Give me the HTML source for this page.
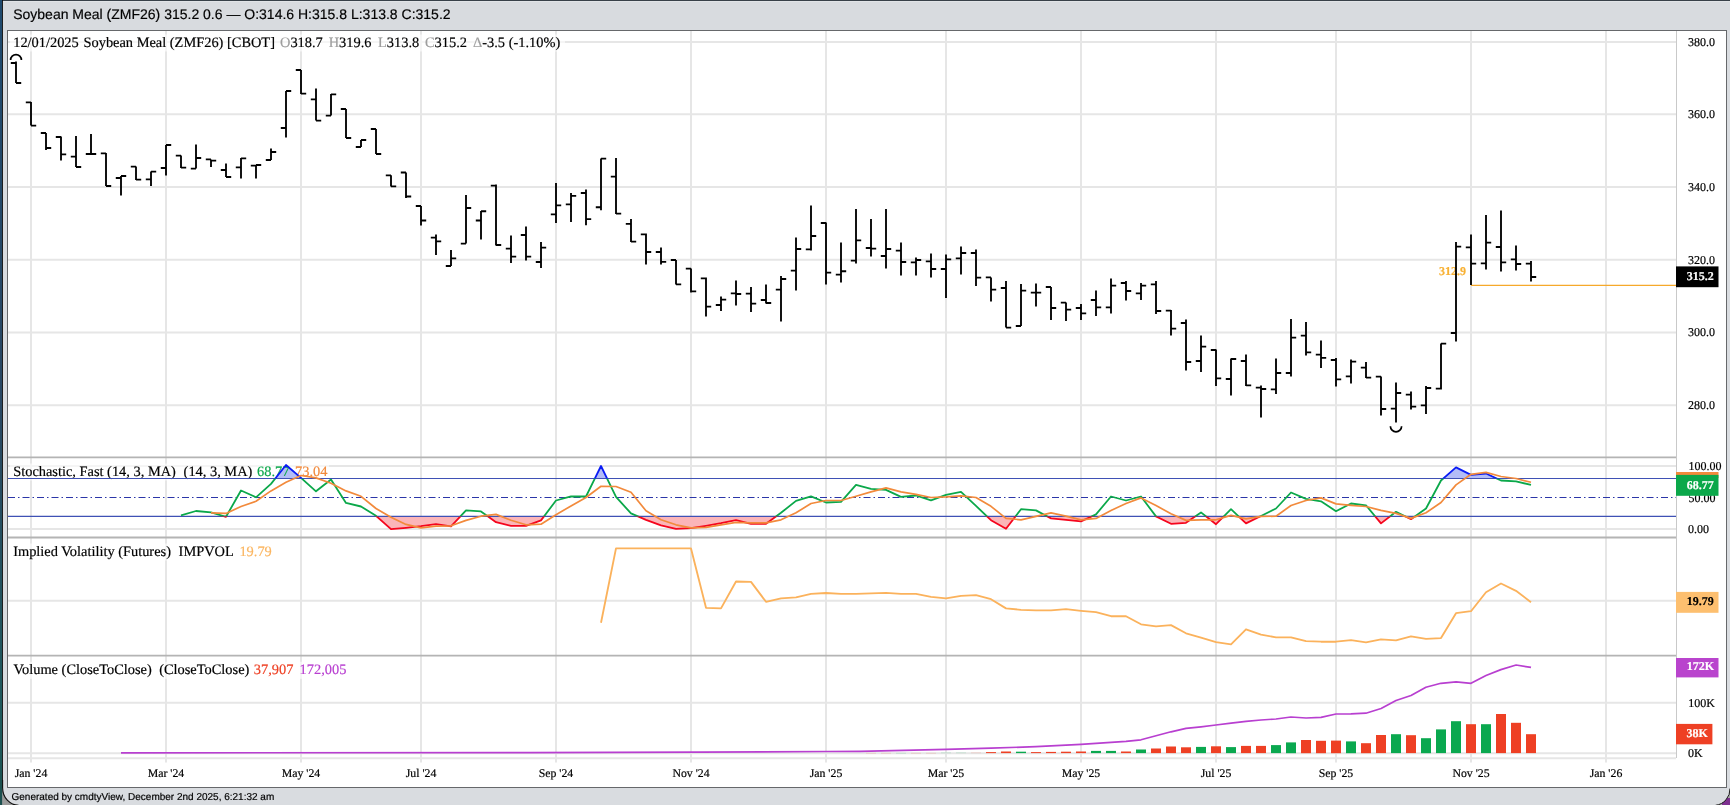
<!DOCTYPE html><html><head><meta charset="utf-8"><title>Chart</title><style>
html,body{margin:0;padding:0;background:#d9dce0;overflow:hidden}
svg{display:block;position:absolute;left:0;top:0;will-change:transform}
text{text-rendering:geometricPrecision;stroke-width:0.18px}
.s{font-family:"Liberation Serif",serif;font-size:14.4px}
.h{paint-order:stroke;stroke:#fff;stroke-opacity:.7;stroke-width:2.5px;stroke-linejoin:round}
.ax{font-family:"Liberation Serif",serif;font-size:12px}
.axb{font-family:"Liberation Serif",serif;font-size:12px;font-weight:bold}
.xl{font-family:"Liberation Serif",serif;font-size:11.8px}
.t{font-family:"Liberation Sans",sans-serif;font-size:14px}
.f{font-family:"Liberation Sans",sans-serif;font-size:10px}
</style></head><body>
<svg width="1730" height="805" viewBox="0 0 1730 805">
<defs><linearGradient id="tg" x1="0" y1="0" x2="0" y2="1"><stop offset="0" stop-color="#d2d5d9"/><stop offset="1" stop-color="#dcdfe3"/></linearGradient>
<clipPath id="above"><rect x="8" y="458" width="1668" height="20.5"/></clipPath>
<clipPath id="mid"><rect x="8" y="478.5" width="1668" height="37.9"/></clipPath>
<clipPath id="below"><rect x="8" y="516.4" width="1668" height="21"/></clipPath>
</defs>
<rect x="0" y="0" width="1730" height="805" fill="#d9dce0"/>
<rect x="0" y="0" width="1730" height="30" fill="#d8dbdf"/>
<path d="M1730 789 A16 16 0 0 1 1716.3 805 L1730 805 Z" fill="#a8a8a8"/>
<clipPath id="brc"><path d="M1730 789 A16 16 0 0 1 1716.3 805 L1730 805 Z"/></clipPath>
<rect x="1722" y="798" width="8" height="7" fill="#7d2f8f" clip-path="url(#brc)"/>
<path d="M1730 788.5 A16.3 16.3 0 0 1 1715.5 805.3" fill="none" stroke="#1a1a1a" stroke-width="1"/>
<rect x="0" y="0" width="1730" height="0.9" fill="#101a24"/>
<rect x="0" y="0.9" width="1730" height="0.8" fill="#e6e8ea"/>
<defs><linearGradient id="lg" x1="0" y1="0" x2="0" y2="1"><stop offset="0" stop-color="#1f4a6e"/><stop offset="0.5" stop-color="#2a4863"/><stop offset="0.9" stop-color="#1f5a5c"/><stop offset="1" stop-color="#1c504f"/></linearGradient></defs>
<rect x="0" y="0" width="2.1" height="805" fill="url(#lg)"/>
<rect x="2.1" y="0" width="0.9" height="805" fill="#0b0b0b"/>
<path d="M0 788 L3 788 A15.6 17 0 0 0 18.6 805 L0 805 Z" fill="#9b9b9b"/>
<rect x="0" y="780" width="2.1" height="25" fill="#1c504f"/>
<path d="M2.6 780 L2.6 788 A16 17.3 0 0 0 18.6 805.3" fill="none" stroke="#111" stroke-width="1.1"/>
<rect x="7.5" y="30.5" width="1719" height="757" fill="#ffffff" stroke="#66686b" stroke-width="1"/>
<line x1="31" y1="31" x2="31" y2="762.5" stroke="#e6e6e6" stroke-width="2"/>
<line x1="166" y1="31" x2="166" y2="762.5" stroke="#e6e6e6" stroke-width="2"/>
<line x1="301" y1="31" x2="301" y2="762.5" stroke="#e6e6e6" stroke-width="2"/>
<line x1="421" y1="31" x2="421" y2="762.5" stroke="#e6e6e6" stroke-width="2"/>
<line x1="556" y1="31" x2="556" y2="762.5" stroke="#e6e6e6" stroke-width="2"/>
<line x1="691" y1="31" x2="691" y2="762.5" stroke="#e6e6e6" stroke-width="2"/>
<line x1="826" y1="31" x2="826" y2="762.5" stroke="#e6e6e6" stroke-width="2"/>
<line x1="946" y1="31" x2="946" y2="762.5" stroke="#e6e6e6" stroke-width="2"/>
<line x1="1081" y1="31" x2="1081" y2="762.5" stroke="#e6e6e6" stroke-width="2"/>
<line x1="1216" y1="31" x2="1216" y2="762.5" stroke="#e6e6e6" stroke-width="2"/>
<line x1="1336" y1="31" x2="1336" y2="762.5" stroke="#e6e6e6" stroke-width="2"/>
<line x1="1471" y1="31" x2="1471" y2="762.5" stroke="#e6e6e6" stroke-width="2"/>
<line x1="1606" y1="31" x2="1606" y2="762.5" stroke="#e6e6e6" stroke-width="2"/>
<line x1="8" y1="42.05" x2="1676" y2="42.05" stroke="#e6e6e6" stroke-width="2"/>
<line x1="8" y1="114.3" x2="1676" y2="114.3" stroke="#e6e6e6" stroke-width="2"/>
<line x1="8" y1="186.9" x2="1676" y2="186.9" stroke="#e6e6e6" stroke-width="2"/>
<line x1="8" y1="259.8" x2="1676" y2="259.8" stroke="#e6e6e6" stroke-width="2"/>
<line x1="8" y1="332.4" x2="1676" y2="332.4" stroke="#e6e6e6" stroke-width="2"/>
<line x1="8" y1="405.3" x2="1676" y2="405.3" stroke="#e6e6e6" stroke-width="2"/>
<line x1="8" y1="466" x2="1676" y2="466" stroke="#e6e6e6" stroke-width="2"/>
<line x1="8" y1="529.0" x2="1676" y2="529.0" stroke="#e6e6e6" stroke-width="2"/>
<line x1="8" y1="600.7" x2="1676" y2="600.7" stroke="#e6e6e6" stroke-width="2"/>
<line x1="8" y1="702.8" x2="1676" y2="702.8" stroke="#e6e6e6" stroke-width="2"/>
<line x1="8" y1="753.2" x2="1676" y2="753.2" stroke="#e6e6e6" stroke-width="2"/>
<line x1="8" y1="758.3" x2="1676" y2="758.3" stroke="#e6e6e6" stroke-width="2"/>
<line x1="8" y1="457.3" x2="1676" y2="457.3" stroke="#b4b4b4" stroke-width="1.8"/>
<line x1="8" y1="537.5" x2="1676" y2="537.5" stroke="#b4b4b4" stroke-width="1.8"/>
<line x1="8" y1="655.6" x2="1676" y2="655.6" stroke="#b4b4b4" stroke-width="1.8"/>
<line x1="1676.5" y1="31" x2="1676.5" y2="758" stroke="#c9c9c9" stroke-width="1"/>
<rect x="10" y="34.5" width="555" height="17" fill="#fff" opacity="0.6"/>
<rect x="10" y="463.5" width="319" height="17" fill="#fff" opacity="0.6"/>
<rect x="10" y="543.5" width="263" height="17" fill="#fff" opacity="0.6"/>
<rect x="10" y="661.8" width="337" height="17" fill="#fff" opacity="0.6"/>
<line x1="1471" y1="285.3" x2="1676" y2="285.3" stroke="#f6a92b" stroke-width="1.3"/>
<text x="1439" y="275" class="s" style="font-size:12px;font-weight:bold" fill="#f8b133" stroke="#f8b133">312.9</text>
<path d="M16 61.5V83.0M10.8 63.0H16M16 83.0H21.2M31 102.0V125.6M25.8 102.4H31M31 125.6H36.2M46 133.0V150.0M40.8 133.0H46M46 148.0H51.2M61 136.6V160.6M55.8 137.0H61M61 154.4H66.2M76 136.0V167.0M70.8 156.6H76M76 167.0H81.2M91 134.0V154.0M85.8 154.0H91M91 154.0H96.2M106 153.0V186.0M100.8 153.4H106M106 186.0H111.2M121 176.0V195.6M115.8 178.0H121M121 176.0H126.2M136 166.6V180.0M130.8 166.6H136M136 179.6H141.2M151 171.6V186.0M145.8 179.4H151M151 171.6H156.2M166 145.0V175.6M160.8 168.0H166M166 145.0H171.2M181 155.6V168.0M175.8 155.6H181M181 167.6H186.2M196 144.4V168.6M190.8 168.6H196M196 158.0H201.2M211 159.4V167.0M205.8 159.4H211M211 160.6H216.2M226 163.6V177.0M220.8 170.0H226M226 177.0H231.2M241 158.0V178.6M235.8 167.4H241M241 158.4H246.2M256 165.0V178.6M250.8 165.6H256M256 165.0H261.2M271 148.6V160.0M265.8 160.0H271M271 152.0H276.2M286 91.0V137.4M280.8 128.0H286M286 91.0H291.2M301 70.0V94.0M295.8 70.0H301M301 93.6H306.2M316 88.4V120.6M310.8 99.4H316M316 120.6H321.2M331 94.0V115.6M325.8 115.6H331M331 94.4H336.2M346 109.0V138.0M340.8 109.0H346M346 138.0H351.2M361 140.0V147.0M355.8 147.0H361M361 140.0H366.2M376 129.0V154.0M370.8 129.0H376M376 154.0H381.2M391 175.3V186.4M385.8 175.3H391M391 186.4H396.2M406 172.5V198.0M400.8 172.5H406M406 196.5H411.2M421 206.0V225.6M415.8 206.0H421M421 220.5H426.2M436 234.4V255.0M430.8 237.6H436M436 241.4H441.2M451 250.0V266.0M445.8 266.0H451M451 258.4H456.2M466 195.0V243.6M460.8 243.6H466M466 208.0H471.2M481 211.0V239.4M475.8 220.5H481M481 211.2H486.2M496 184.6V245.4M490.8 185.6H496M496 245.0H501.2M511 235.6V263.0M505.8 248.6H511M511 256.6H516.2M526 226.6V260.4M520.8 235.0H526M526 256.6H531.2M541 242.0V268.0M535.8 262.0H541M541 247.6H546.2M556 183.0V223.0M550.8 214.4H556M556 205.4H561.2M571 193.0V222.0M565.8 204.4H571M571 195.8H576.2M586 189.4V225.2M580.8 193.0H586M586 219.1H591.2M601 158.6V210.2M595.8 207.2H601M601 158.6H606.2M616 158.0V214.0M610.8 176.6H616M616 213.6H621.2M631 219.0V242.0M625.8 223.8H631M631 241.6H636.2M646 233.4V264.6M640.8 234.4H646M646 252.0H651.2M661 247.4V264.6M655.8 252.0H661M661 261.8H666.2M676 260.0V284.4M670.8 260.0H676M676 284.4H681.2M691 268.6V292.4M685.8 268.6H691M691 291.4H696.2M706 277.4V316.4M700.8 278.4H706M706 306.6H711.2M721 296.4V311.0M715.8 305.0H721M721 299.6H726.2M736 280.4V305.6M730.8 293.4H736M736 294.0H741.2M751 287.0V312.0M745.8 293.6H751M751 303.6H756.2M766 284.4V303.6M760.8 300.0H766M766 303.0H771.2M781 276.0V321.6M775.8 289.6H781M781 279.0H786.2M796 237.4V290.4M790.8 270.6H796M796 249.0H801.2M811 205.6V250.4M805.8 249.4H811M811 236.0H816.2M826 222.6V284.6M820.8 223.0H826M826 272.6H831.2M841 242.4V282.6M835.8 274.6H841M841 271.2H846.2M856 209.0V263.6M850.8 260.6H856M856 240.4H861.2M871 219.0V256.6M865.8 248.0H871M871 248.6H876.2M886 209.0V268.6M880.8 256.0H886M886 249.0H891.2M901 242.6V275.6M895.8 250.6H901M901 262.0H906.2M916 257.6V275.4M910.8 262.4H916M916 260.0H921.2M931 253.4V277.6M925.8 261.4H931M931 269.0H936.2M946 254.4V298.0M940.8 269.0H946M946 259.4H951.2M961 246.6V274.6M955.8 258.4H961M961 253.0H966.2M976 249.4V286.0M970.8 253.0H976M976 277.6H981.2M991 277.4V301.6M985.8 277.4H991M991 289.6H996.2M1006 281.0V327.6M1000.8 288.0H1006M1006 327.6H1011.2M1021 284.0V326.0M1015.8 326.0H1021M1021 290.6H1026.2M1036 283.6V306.4M1030.8 292.6H1036M1036 292.6H1041.2M1051 287.0V320.0M1045.8 287.0H1051M1051 308.0H1056.2M1066 302.6V321.0M1060.8 302.6H1066M1066 309.6H1071.2M1081 304.0V320.0M1075.8 308.0H1081M1081 313.4H1086.2M1096 290.4V316.0M1090.8 300.0H1096M1096 307.4H1101.2M1111 278.4V313.6M1105.8 307.4H1111M1111 285.6H1116.2M1126 281.0V300.4M1120.8 283.0H1126M1126 291.0H1131.2M1141 283.0V300.0M1135.8 293.4H1141M1141 285.6H1146.2M1156 281.0V314.0M1150.8 284.4H1156M1156 311.0H1161.2M1171 310.0V335.4M1165.8 310.6H1171M1171 328.6H1176.2M1186 319.4V370.6M1180.8 323.0H1186M1186 362.0H1191.2M1201 335.4V372.0M1195.8 361.0H1201M1201 346.6H1206.2M1216 349.6V386.0M1210.8 350.0H1216M1216 378.4H1221.2M1231 358.6V395.6M1225.8 379.0H1231M1231 359.0H1236.2M1246 354.6V386.0M1240.8 361.0H1246M1246 385.4H1251.2M1261 385.4V417.4M1255.8 387.6H1261M1261 389.0H1266.2M1276 358.6V394.0M1270.8 389.4H1276M1276 373.0H1281.2M1291 319.0V376.4M1285.8 373.0H1291M1291 337.6H1296.2M1306 322.0V355.4M1300.8 335.6H1306M1306 352.4H1311.2M1321 340.4V368.0M1315.8 354.6H1321M1321 357.8H1326.2M1336 358.0V386.6M1330.8 360.0H1336M1336 379.4H1341.2M1351 359.4V383.6M1345.8 376.4H1351M1351 361.6H1356.2M1366 362.0V378.0M1360.8 367.6H1366M1366 377.6H1371.2M1381 376.4V415.6M1375.8 376.6H1381M1381 409.0H1386.2M1396 382.4V422.4M1390.8 408.6H1396M1396 393.0H1401.2M1411 391.4V409.4M1405.8 394.6H1411M1411 406.6H1416.2M1426 386.0V414.0M1420.8 405.4H1426M1426 388.0H1431.2M1441 343.6V389.4M1435.8 388.6H1441M1441 343.6H1446.2M1456 242.0V341.4M1450.8 333.0H1456M1456 246.6H1461.2M1471 234.4V285.0M1465.8 247.4H1471M1471 263.6H1476.2M1486 215.0V269.4M1480.8 263.4H1486M1486 242.6H1491.2M1501 210.4V271.4M1495.8 247.0H1501M1501 262.4H1506.2M1516 245.4V270.4M1510.8 259.4H1516M1516 264.0H1521.2M1531 261.0V281.4M1525.8 263.6H1531M1531 277.0H1536.2" stroke="#000" stroke-width="1.85" fill="none"/>
<path d="M10.6 60 A5.4 5.4 0 0 1 21.4 60" stroke="#000" stroke-width="1.7" fill="none"/>
<path d="M1390.4 426.2 A5.6 5.6 0 0 0 1401.6 426.2" stroke="#000" stroke-width="1.7" fill="none"/>
<path d="M181,515.4 L196,511.0 L211,512.4 L226,516.8 L241,490.5 L256,497.3 L271,483.9 L286,465.0 L301,477.9 L316,491.3 L331,479.5 L346,502.9 L361,506.5 L376,515.8 L391,529.2 L406,527.8 L421,526.2 L436,524.2 L451,526.4 L466,510.4 L481,511.4 L496,522.2 L511,525.8 L526,525.8 L541,520.4 L556,500.5 L571,496.3 L586,496.5 L601,466.0 L616,496.9 L631,513.4 L646,519.8 L661,525.4 L676,528.8 L691,528.2 L706,525.8 L721,523.2 L736,520.2 L751,523.8 L766,523.8 L781,512.8 L796,500.9 L811,496.3 L826,502.5 L841,501.9 L856,484.9 L871,488.9 L886,489.9 L901,496.9 L916,495.5 L931,500.3 L946,494.9 L961,491.9 L976,505.9 L991,520.2 L1006,528.8 L1021,509.2 L1036,510.4 L1051,518.4 L1066,519.8 L1081,521.4 L1096,514.4 L1111,496.5 L1126,500.5 L1141,496.5 L1156,516.4 L1171,523.8 L1186,522.8 L1201,512.4 L1216,524.2 L1231,509.2 L1246,523.4 L1261,516.0 L1276,508.5 L1291,492.5 L1306,498.9 L1321,501.3 L1336,511.2 L1351,503.5 L1366,505.3 L1381,523.4 L1396,511.8 L1411,519.2 L1426,508.5 L1441,480.5 L1456,467.4 L1471,474.9 L1486,473.5 L1501,480.5 L1516,481.3 L1531,484.9 L1531,478.5 L181,478.5 Z" fill="#b3bdf7" clip-path="url(#above)"/>
<path d="M181,515.4 L196,511.0 L211,512.4 L226,516.8 L241,490.5 L256,497.3 L271,483.9 L286,465.0 L301,477.9 L316,491.3 L331,479.5 L346,502.9 L361,506.5 L376,515.8 L391,529.2 L406,527.8 L421,526.2 L436,524.2 L451,526.4 L466,510.4 L481,511.4 L496,522.2 L511,525.8 L526,525.8 L541,520.4 L556,500.5 L571,496.3 L586,496.5 L601,466.0 L616,496.9 L631,513.4 L646,519.8 L661,525.4 L676,528.8 L691,528.2 L706,525.8 L721,523.2 L736,520.2 L751,523.8 L766,523.8 L781,512.8 L796,500.9 L811,496.3 L826,502.5 L841,501.9 L856,484.9 L871,488.9 L886,489.9 L901,496.9 L916,495.5 L931,500.3 L946,494.9 L961,491.9 L976,505.9 L991,520.2 L1006,528.8 L1021,509.2 L1036,510.4 L1051,518.4 L1066,519.8 L1081,521.4 L1096,514.4 L1111,496.5 L1126,500.5 L1141,496.5 L1156,516.4 L1171,523.8 L1186,522.8 L1201,512.4 L1216,524.2 L1231,509.2 L1246,523.4 L1261,516.0 L1276,508.5 L1291,492.5 L1306,498.9 L1321,501.3 L1336,511.2 L1351,503.5 L1366,505.3 L1381,523.4 L1396,511.8 L1411,519.2 L1426,508.5 L1441,480.5 L1456,467.4 L1471,474.9 L1486,473.5 L1501,480.5 L1516,481.3 L1531,484.9 L1531,516.4 L181,516.4 Z" fill="#fbb5b9" clip-path="url(#below)"/>
<text x="13.2" y="476" class="s" fill="#000" stroke="#000">Stochastic, Fast (14, 3, MA)</text>
<text x="183.6" y="476" class="s" fill="#000" stroke="#000">(14, 3, MA)</text>
<text x="257" y="476" class="s" fill="#0ba84a" stroke="#0ba84a">68.77</text>
<text x="295" y="476" class="s" fill="#f28a3c" stroke="#f28a3c">73.04</text>
<line x1="8" y1="478.5" x2="1676" y2="478.5" stroke="#3f51b5" stroke-width="1.1"/>
<line x1="8" y1="516.4" x2="1676" y2="516.4" stroke="#3f51b5" stroke-width="1.1"/>
<line x1="8" y1="497.5" x2="1676" y2="497.5" stroke="#2b35a8" stroke-width="1.2" stroke-dasharray="7,3,1.5,3"/>
<polyline points="181,515.4 196,511.0 211,512.4 226,516.8 241,490.5 256,497.3 271,483.9 286,465.0 301,477.9 316,491.3 331,479.5 346,502.9 361,506.5 376,515.8 391,529.2 406,527.8 421,526.2 436,524.2 451,526.4 466,510.4 481,511.4 496,522.2 511,525.8 526,525.8 541,520.4 556,500.5 571,496.3 586,496.5 601,466.0 616,496.9 631,513.4 646,519.8 661,525.4 676,528.8 691,528.2 706,525.8 721,523.2 736,520.2 751,523.8 766,523.8 781,512.8 796,500.9 811,496.3 826,502.5 841,501.9 856,484.9 871,488.9 886,489.9 901,496.9 916,495.5 931,500.3 946,494.9 961,491.9 976,505.9 991,520.2 1006,528.8 1021,509.2 1036,510.4 1051,518.4 1066,519.8 1081,521.4 1096,514.4 1111,496.5 1126,500.5 1141,496.5 1156,516.4 1171,523.8 1186,522.8 1201,512.4 1216,524.2 1231,509.2 1246,523.4 1261,516.0 1276,508.5 1291,492.5 1306,498.9 1321,501.3 1336,511.2 1351,503.5 1366,505.3 1381,523.4 1396,511.8 1411,519.2 1426,508.5 1441,480.5 1456,467.4 1471,474.9 1486,473.5 1501,480.5 1516,481.3 1531,484.9" stroke="#0ba84a" stroke-width="1.8" fill="none" stroke-linejoin="round" clip-path="url(#mid)"/>
<polyline points="181,515.4 196,511.0 211,512.4 226,516.8 241,490.5 256,497.3 271,483.9 286,465.0 301,477.9 316,491.3 331,479.5 346,502.9 361,506.5 376,515.8 391,529.2 406,527.8 421,526.2 436,524.2 451,526.4 466,510.4 481,511.4 496,522.2 511,525.8 526,525.8 541,520.4 556,500.5 571,496.3 586,496.5 601,466.0 616,496.9 631,513.4 646,519.8 661,525.4 676,528.8 691,528.2 706,525.8 721,523.2 736,520.2 751,523.8 766,523.8 781,512.8 796,500.9 811,496.3 826,502.5 841,501.9 856,484.9 871,488.9 886,489.9 901,496.9 916,495.5 931,500.3 946,494.9 961,491.9 976,505.9 991,520.2 1006,528.8 1021,509.2 1036,510.4 1051,518.4 1066,519.8 1081,521.4 1096,514.4 1111,496.5 1126,500.5 1141,496.5 1156,516.4 1171,523.8 1186,522.8 1201,512.4 1216,524.2 1231,509.2 1246,523.4 1261,516.0 1276,508.5 1291,492.5 1306,498.9 1321,501.3 1336,511.2 1351,503.5 1366,505.3 1381,523.4 1396,511.8 1411,519.2 1426,508.5 1441,480.5 1456,467.4 1471,474.9 1486,473.5 1501,480.5 1516,481.3 1531,484.9" stroke="#0a1cf5" stroke-width="1.8" fill="none" stroke-linejoin="round" clip-path="url(#above)"/>
<polyline points="181,515.4 196,511.0 211,512.4 226,516.8 241,490.5 256,497.3 271,483.9 286,465.0 301,477.9 316,491.3 331,479.5 346,502.9 361,506.5 376,515.8 391,529.2 406,527.8 421,526.2 436,524.2 451,526.4 466,510.4 481,511.4 496,522.2 511,525.8 526,525.8 541,520.4 556,500.5 571,496.3 586,496.5 601,466.0 616,496.9 631,513.4 646,519.8 661,525.4 676,528.8 691,528.2 706,525.8 721,523.2 736,520.2 751,523.8 766,523.8 781,512.8 796,500.9 811,496.3 826,502.5 841,501.9 856,484.9 871,488.9 886,489.9 901,496.9 916,495.5 931,500.3 946,494.9 961,491.9 976,505.9 991,520.2 1006,528.8 1021,509.2 1036,510.4 1051,518.4 1066,519.8 1081,521.4 1096,514.4 1111,496.5 1126,500.5 1141,496.5 1156,516.4 1171,523.8 1186,522.8 1201,512.4 1216,524.2 1231,509.2 1246,523.4 1261,516.0 1276,508.5 1291,492.5 1306,498.9 1321,501.3 1336,511.2 1351,503.5 1366,505.3 1381,523.4 1396,511.8 1411,519.2 1426,508.5 1441,480.5 1456,467.4 1471,474.9 1486,473.5 1501,480.5 1516,481.3 1531,484.9" stroke="#f5051d" stroke-width="1.8" fill="none" stroke-linejoin="round" clip-path="url(#below)"/>
<polyline points="211,512.8 226,513.4 241,506.5 256,501.3 271,490.9 286,482.3 301,475.5 316,477.9 331,483.3 346,490.9 361,496.3 376,508.5 391,517.2 406,524.4 421,527.8 436,526.2 451,525.8 466,520.4 481,516.2 496,514.4 511,520.2 526,524.8 541,524.2 556,514.8 571,505.9 586,497.5 601,486.3 616,486.5 631,492.3 646,510.8 661,519.8 676,524.8 691,527.8 706,527.4 721,524.8 736,522.4 751,522.8 766,522.8 781,519.8 796,512.8 811,503.5 826,500.5 841,500.5 856,496.3 871,491.9 886,487.9 901,491.9 916,494.3 931,497.5 946,496.9 961,495.9 976,497.5 991,506.3 1006,518.4 1021,519.8 1036,516.4 1051,512.8 1066,516.2 1081,519.8 1096,518.4 1111,510.4 1126,503.5 1141,497.9 1156,505.5 1171,513.8 1186,520.4 1201,519.8 1216,519.8 1231,515.4 1246,518.8 1261,516.4 1276,516.2 1291,505.5 1306,500.5 1321,497.9 1336,503.9 1351,505.3 1366,506.5 1381,510.4 1396,513.4 1411,518.4 1426,512.8 1441,502.5 1456,484.9 1471,474.3 1486,472.4 1501,476.5 1516,478.5 1531,482.3" stroke="#f28a3c" stroke-width="1.7" fill="none" stroke-linejoin="round"/>
<polyline points="601,622.8 616,548.4 631,548.4 646,548.4 661,548.4 676,548.4 691,548.4 706,607.8 721,608.4 736,581.5 751,581.9 766,601.8 781,598.4 796,597.4 811,593.8 826,593.0 841,593.8 856,593.8 871,593.4 886,592.8 901,593.8 916,593.8 931,596.8 946,598.4 961,595.8 976,595.2 991,599.2 1006,608.4 1021,609.8 1036,610.4 1051,610.4 1066,609.2 1081,610.8 1096,612.2 1111,616.2 1126,616.2 1141,624.3 1156,626.3 1171,625.1 1186,633.3 1201,637.7 1216,642.1 1231,644.3 1246,629.3 1261,634.7 1276,637.3 1291,637.3 1306,641.1 1321,641.7 1336,641.7 1351,640.1 1366,642.3 1381,639.3 1396,640.3 1411,636.3 1426,638.9 1441,638.1 1456,613.2 1471,611.2 1486,592.2 1501,583.5 1516,590.8 1531,602.2" stroke="#fbb25c" stroke-width="1.85" fill="none" stroke-linejoin="round"/>
<rect x="866" y="752.9" width="10" height="0.4" fill="#ee4024" opacity="0.35"/>
<rect x="881" y="752.9" width="10" height="0.4" fill="#ee4024" opacity="0.35"/>
<rect x="896" y="752.9" width="10" height="0.4" fill="#0aa84f" opacity="0.35"/>
<rect x="911" y="752.9" width="10" height="0.4" fill="#ee4024" opacity="0.35"/>
<rect x="926" y="752.9" width="10" height="0.4" fill="#ee4024" opacity="0.35"/>
<rect x="941" y="752.7" width="10" height="0.4" fill="#0aa84f" opacity="0.35"/>
<rect x="956" y="752.7" width="10" height="0.4" fill="#0aa84f" opacity="0.35"/>
<rect x="971" y="752.7" width="10" height="0.4" fill="#ee4024" opacity="0.35"/>
<rect x="986" y="752.1" width="10" height="1.0" fill="#ee4024"/>
<rect x="1001" y="751.5" width="10" height="1.6" fill="#ee4024"/>
<rect x="1016" y="751.7" width="10" height="1.4" fill="#0aa84f"/>
<rect x="1031" y="752.1" width="10" height="1.0" fill="#ee4024"/>
<rect x="1046" y="751.9" width="10" height="1.2" fill="#ee4024"/>
<rect x="1061" y="751.7" width="10" height="1.4" fill="#ee4024"/>
<rect x="1076" y="751.5" width="10" height="1.6" fill="#ee4024"/>
<rect x="1091" y="750.9" width="10" height="2.2" fill="#0aa84f"/>
<rect x="1106" y="750.9" width="10" height="2.2" fill="#0aa84f"/>
<rect x="1121" y="751.5" width="10" height="1.6" fill="#ee4024"/>
<rect x="1136" y="749.5" width="10" height="3.6" fill="#0aa84f"/>
<rect x="1151" y="748.5" width="10" height="4.6" fill="#ee4024"/>
<rect x="1166" y="746.5" width="10" height="6.6" fill="#ee4024"/>
<rect x="1181" y="747.3" width="10" height="5.8" fill="#ee4024"/>
<rect x="1196" y="746.9" width="10" height="6.2" fill="#0aa84f"/>
<rect x="1211" y="746.3" width="10" height="6.8" fill="#ee4024"/>
<rect x="1226" y="747.1" width="10" height="6.0" fill="#0aa84f"/>
<rect x="1241" y="745.9" width="10" height="7.2" fill="#ee4024"/>
<rect x="1256" y="745.9" width="10" height="7.2" fill="#ee4024"/>
<rect x="1271" y="745.1" width="10" height="8.0" fill="#0aa84f"/>
<rect x="1286" y="742.4" width="10" height="10.8" fill="#0aa84f"/>
<rect x="1301" y="740.0" width="10" height="13.2" fill="#ee4024"/>
<rect x="1316" y="740.8" width="10" height="12.4" fill="#ee4024"/>
<rect x="1331" y="740.6" width="10" height="12.6" fill="#ee4024"/>
<rect x="1346" y="741.4" width="10" height="11.8" fill="#0aa84f"/>
<rect x="1361" y="743.2" width="10" height="10.0" fill="#ee4024"/>
<rect x="1376" y="735.0" width="10" height="18.1" fill="#ee4024"/>
<rect x="1391" y="734.2" width="10" height="18.9" fill="#0aa84f"/>
<rect x="1406" y="735.2" width="10" height="17.9" fill="#ee4024"/>
<rect x="1421" y="738.2" width="10" height="15.0" fill="#0aa84f"/>
<rect x="1436" y="729.4" width="10" height="23.7" fill="#0aa84f"/>
<rect x="1451" y="721.2" width="10" height="31.9" fill="#0aa84f"/>
<rect x="1466" y="724.2" width="10" height="28.9" fill="#ee4024"/>
<rect x="1481" y="724.2" width="10" height="28.9" fill="#0aa84f"/>
<rect x="1496" y="714.0" width="10" height="39.1" fill="#ee4024"/>
<rect x="1511" y="722.8" width="10" height="30.3" fill="#ee4024"/>
<rect x="1526" y="734.2" width="10" height="18.9" fill="#ee4024"/>
<polyline points="121.0,752.8 530.0,752.7 700.0,752.2 826.0,751.5 860.0,751.3 946.0,749.3 991.0,748.1 1036.0,746.7 1081.0,744.4 1111.0,742.4 1126.0,741.4 1141.0,739.8 1156.0,735.8 1171.0,731.8 1186.0,728.4 1201.0,726.8 1215.9,725.0 1231.1,723.2 1246.0,721.4 1261.0,720.0 1276.0,719.0 1290.9,717.0 1306.1,718.0 1321.0,717.4 1336.0,714.0 1350.9,713.8 1365.9,713.2 1381.1,708.5 1396.0,700.5 1411.0,695.5 1425.9,687.3 1440.9,683.3 1456.1,681.9 1471.0,683.3 1486.0,675.5 1500.9,669.6 1516.1,665.0 1531.0,667.4" stroke="#b83fd0" stroke-width="1.7" fill="none" stroke-linejoin="round"/>
<text x="13.2" y="19" class="t" fill="#000" stroke="#000">Soybean Meal (ZMF26) 315.2 0.6 — O:314.6 H:315.8 L:313.8 C:315.2</text>
<text x="13.2" y="46.8" class="s" fill="#000" stroke="#000">12/01/2025</text>
<text x="83.5" y="46.8" class="s" fill="#000" stroke="#000">Soybean Meal (ZMF26) [CBOT]</text>
<text x="280" y="46.8" class="s"><tspan fill="#9e9e9e" stroke="#9e9e9e">O</tspan><tspan fill="#000" stroke="#000">318.7</tspan></text>
<text x="328.7" y="46.8" class="s"><tspan fill="#9e9e9e" stroke="#9e9e9e">H</tspan><tspan fill="#000" stroke="#000">319.6</tspan></text>
<text x="378" y="46.8" class="s"><tspan fill="#9e9e9e" stroke="#9e9e9e">L</tspan><tspan fill="#000" stroke="#000">313.8</tspan></text>
<text x="425" y="46.8" class="s"><tspan fill="#9e9e9e" stroke="#9e9e9e">C</tspan><tspan fill="#000" stroke="#000">315.2</tspan></text>
<text x="473" y="46.8" class="s"><tspan fill="#9e9e9e" stroke="#9e9e9e">Δ</tspan><tspan fill="#000" stroke="#000">-3.5 (-1.10%)</tspan></text>
<text x="13.2" y="556" class="s" fill="#000" stroke="#000">Implied Volatility (Futures)</text>
<text x="178.6" y="556" class="s" fill="#000" stroke="#000">IMPVOL</text>
<text x="239.4" y="556" class="s" fill="#fbb661" stroke="#fbb661">19.79</text>
<text x="13.5" y="674.3" class="s" fill="#000" stroke="#000">Volume (CloseToClose)</text>
<text x="159.2" y="674.3" class="s" fill="#000" stroke="#000">(CloseToClose)</text>
<text x="253.8" y="674.3" class="s" fill="#ee4024" stroke="#ee4024">37,907</text>
<text x="299.6" y="674.3" class="s" fill="#b83fd0" stroke="#b83fd0">172,005</text>
<text x="1688" y="45.65" class="ax" fill="#000" stroke="#000">380.0</text>
<text x="1688" y="117.89999999999999" class="ax" fill="#000" stroke="#000">360.0</text>
<text x="1688" y="190.5" class="ax" fill="#000" stroke="#000">340.0</text>
<text x="1688" y="264.3" class="ax" fill="#000" stroke="#000">320.0</text>
<text x="1688" y="336.0" class="ax" fill="#000" stroke="#000">300.0</text>
<text x="1688" y="408.90000000000003" class="ax" fill="#000" stroke="#000">280.0</text>
<text x="1688.6" y="469.9" class="ax" fill="#000" stroke="#000">100.00</text>
<text x="1688.6" y="501.8" class="ax" fill="#000" stroke="#000">50.00</text>
<text x="1688" y="532.8" class="ax" fill="#000" stroke="#000">0.00</text>
<text x="1688.3" y="706.8" class="ax" fill="#000" stroke="#000">100K</text>
<text x="1688" y="756.8" class="ax" fill="#000" stroke="#000">0K</text>
<text x="31" y="776.9" class="xl" fill="#000" stroke="#000" text-anchor="middle">Jan &#39;24</text>
<text x="166" y="776.9" class="xl" fill="#000" stroke="#000" text-anchor="middle">Mar &#39;24</text>
<text x="301" y="776.9" class="xl" fill="#000" stroke="#000" text-anchor="middle">May &#39;24</text>
<text x="421" y="776.9" class="xl" fill="#000" stroke="#000" text-anchor="middle">Jul &#39;24</text>
<text x="556" y="776.9" class="xl" fill="#000" stroke="#000" text-anchor="middle">Sep &#39;24</text>
<text x="691" y="776.9" class="xl" fill="#000" stroke="#000" text-anchor="middle">Nov &#39;24</text>
<text x="826" y="776.9" class="xl" fill="#000" stroke="#000" text-anchor="middle">Jan &#39;25</text>
<text x="946" y="776.9" class="xl" fill="#000" stroke="#000" text-anchor="middle">Mar &#39;25</text>
<text x="1081" y="776.9" class="xl" fill="#000" stroke="#000" text-anchor="middle">May &#39;25</text>
<text x="1216" y="776.9" class="xl" fill="#000" stroke="#000" text-anchor="middle">Jul &#39;25</text>
<text x="1336" y="776.9" class="xl" fill="#000" stroke="#000" text-anchor="middle">Sep &#39;25</text>
<text x="1471" y="776.9" class="xl" fill="#000" stroke="#000" text-anchor="middle">Nov &#39;25</text>
<text x="1606" y="776.9" class="xl" fill="#000" stroke="#000" text-anchor="middle">Jan &#39;26</text>
<rect x="1676" y="266.4" width="42.5" height="20.80000000000001" fill="#000"/>
<text x="1713.8" y="280.3" class="axb" fill="#fff" stroke="#fff" text-anchor="end">315.2</text>
<rect x="1676" y="472" width="42.5" height="6" fill="#f28a3c"/>
<rect x="1676" y="474.9" width="42.5" height="20.900000000000034" fill="#0ba84a"/>
<text x="1713.8" y="488.7" class="axb" fill="#fff" stroke="#fff" text-anchor="end">68.77</text>
<rect x="1676" y="591.9" width="42.5" height="20.899999999999977" fill="#fdbf6f"/>
<text x="1713.8" y="605.1" class="axb" fill="#000" stroke="#000" text-anchor="end">19.79</text>
<rect x="1676" y="658" width="42.5" height="19.399999999999977" fill="#b944cd"/>
<text x="1714.2" y="669.7" class="axb" fill="#fff" stroke="#fff" text-anchor="end">172K</text>
<rect x="1676" y="723.9" width="36.40000000000009" height="20.399999999999977" fill="#ee4024"/>
<text x="1707.8" y="736.5" class="axb" fill="#fff" stroke="#fff" text-anchor="end">38K</text>
<text x="11.5" y="800" class="f" fill="#000" stroke="#000">Generated by cmdtyView, December 2nd 2025, 6:21:32 am</text>
</svg></body></html>
